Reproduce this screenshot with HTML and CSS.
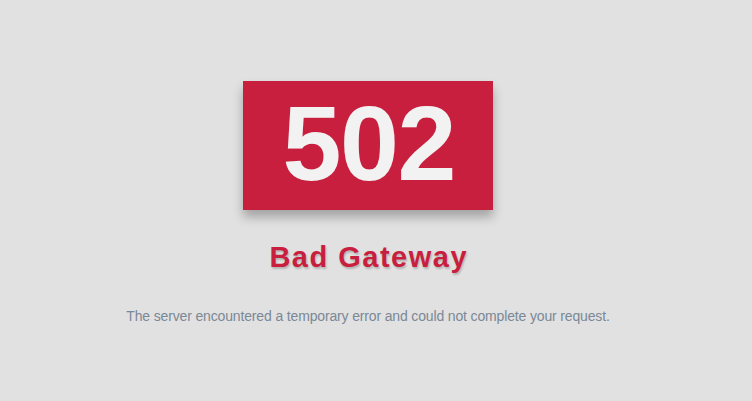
FILE: index.html
```html
<!DOCTYPE html>
<html>
<head>
<meta charset="utf-8">
<link rel="stylesheet" href="styles.css">
</head>
<body>
<main class="page">
  <div class="code-box"><span class="code">502</span></div>
  <h1 class="title">Bad Gateway</h1>
  <p class="message">The server encountered a temporary error and could not complete your request.</p>
</main>
</body>
</html>
```
FILE: styles.css
```css
html, body {
  margin: 0;
  padding: 0;
  background: #e1e1e1;
}
.page {
  width: 736px;
  display: flex;
  flex-direction: column;
  align-items: center;
  padding-top: 81px;
  font-family: "Liberation Sans", Arial, sans-serif;
}
.code-box {
  width: 250px;
  height: 129px;
  background: #c81f3f;
  box-shadow: 0 7px 10px rgba(0,0,0,0.28);
  display: flex;
  align-items: center;
  justify-content: center;
}
.code {
  color: #f2f2f2;
  font-size: 106px;
  font-weight: bold;
  line-height: 1;
  letter-spacing: -1.5px;
  margin-right: -1.5px;
  margin-bottom: 6px;
}
.title {
  margin: 27px 0 0;
  color: #c81f3f;
  font-size: 29px;
  font-weight: bold;
  line-height: 40px;
  letter-spacing: 1.5px;
  margin-right: -1.5px;
  text-shadow: 1px 2px 2px rgba(0,0,0,0.2);
}
.message {
  margin: 30px 0 0;
  color: #7b8896;
  font-size: 14px;
  line-height: 18px;
  letter-spacing: -0.15px;
}
```
